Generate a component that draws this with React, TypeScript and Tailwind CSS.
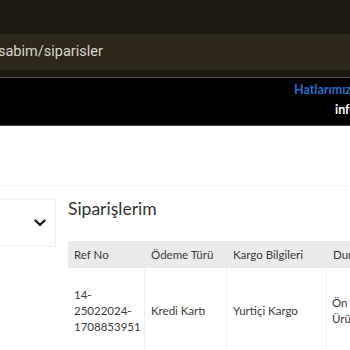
const columns = [
  { id: "ref", label: "Ref No", width: "w-[77px]" },
  { id: "odeme", label: "Ödeme Türü", width: "w-[82px]" },
  { id: "kargo", label: "Kargo Bilgileri", width: "w-[100px]" },
  { id: "durum", label: "Durum", width: "w-[110px]" },
];

const orders = [
  {
    id: "1",
    ref: ["14-", "25022024-", "1708853951"],
    odeme: "Kredi Kartı",
    kargo: "Yurtiçi Kargo",
    durum: ["Ön Sipariş", "Ürün Hazırlanıyor"],
  },
];

export default function App() {
  return (
    <div className="w-[350px] h-[350px] overflow-hidden bg-white font-['Lato','Noto_Sans',sans-serif]">
      {/* browser chrome */}
      <div className="bg-[#1c1911] pt-[34px] pb-[7px]">
        <div className="h-[36px] bg-[#2c2719] flex items-center overflow-hidden">
          <span className="ml-[-2px] whitespace-nowrap font-['Roboto',sans-serif] text-[14.5px] text-[#d9d5ca]">
            sabim/siparisler
          </span>
        </div>
      </div>
      <div className="h-px bg-[#5a5a56]" />
      {/* top bar */}
      <div className="h-[47px] bg-black overflow-hidden pl-[294px] pt-[2px] whitespace-nowrap">
        <div className="text-[12.5px] font-bold text-[#2b6dc6] leading-[20px]">Hatlarımız</div>
        <div className="text-[12.5px] font-bold text-white leading-[20px] pl-[41px]">info@site.com</div>
      </div>
      <div className="h-px bg-[#444]" />

      <div className="h-[59px]" />
      <div className="h-px bg-[#f1f1f1]" />

      <div className="flex pt-[12px]">
        <div className="w-[56px] shrink-0 h-[48px] border-y border-r border-[#eeeeee] flex items-center justify-end pr-[9px] mt-[1px]">
          <svg width="12" height="8" viewBox="0 0 12 8" fill="none">
            <path d="M1.5 1.5L6 6L10.5 1.5" stroke="#1a1a1a" strokeWidth="2.4" strokeLinecap="round" strokeLinejoin="round" />
          </svg>
        </div>
        <div className="ml-[12px] shrink-0">
          <div className="text-[17.5px] text-[#333] leading-[22px]">Siparişlerim</div>
          <div className="mt-[21px] w-[369px]">
            <div className="flex bg-[#ebebeb] h-[27px] items-center text-[11.5px] text-[#3a3a3a]">
              {columns.map((c) => (
                <div key={c.id} className={`${c.width} px-[6px] whitespace-nowrap`}>
                  {c.label}
                </div>
              ))}
            </div>
            {orders.map((o) => (
              <div key={o.id} className="flex text-[11.5px] text-[#3a3a3a] leading-[16px] h-[90px] border-b border-[#eeeeee]">
                <div className="w-[77px] px-[6px] border-r border-[#f0f0f0] flex flex-col justify-center pb-[4px]">
                  {o.ref.map((r) => (
                    <div key={r}>{r}</div>
                  ))}
                </div>
                <div className="w-[82px] px-[6px] border-r border-[#f0f0f0] flex items-center pb-[4px]">{o.odeme}</div>
                <div className="w-[100px] px-[6px] border-r border-[#f0f0f0] flex items-center pb-[4px]">{o.kargo}</div>
                <div className="w-[110px] px-[5px] flex flex-col justify-center pb-[4px] whitespace-nowrap">
                  {o.durum.map((d) => (
                    <div key={d}>{d}</div>
                  ))}
                </div>
              </div>
            ))}
          </div>
        </div>
      </div>
    </div>
  );
}
